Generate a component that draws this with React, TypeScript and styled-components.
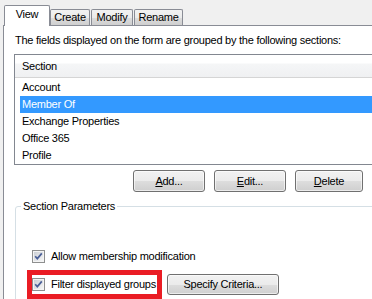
import React from "react";
import styled, { createGlobalStyle } from "styled-components";

const GlobalStyle = createGlobalStyle`
  html, body { margin: 0; padding: 0; background: #f0f0f0; }
  body {
    font-family: "Liberation Sans", Arial, sans-serif;
    font-size: 11px;
    letter-spacing: -0.25px;
    color: #000;
  }
`;

const Window = styled.div`
  width: 372px;
  height: 299px;
  overflow: hidden;
  background: #f0f0f0;
  padding: 5px 0 0 3px;
  box-sizing: border-box;
`;

const TabStrip = styled.div`
  display: flex;
  align-items: flex-end;
  height: 21px;
  padding-left: 1px;
  position: relative;
  z-index: 1;
`;

const Tab = styled.div<{ $active?: boolean; $w: number }>`
  box-sizing: border-box;
  width: ${(p) => p.$w}px;
  height: ${(p) => (p.$active ? 21 : 16)}px;
  margin-bottom: ${(p) => (p.$active ? 0 : 1)}px;
  margin-left: ${(p) => (p.$active ? 0 : 1)}px;
  margin-right: ${(p) => (p.$active ? -1 : 0)}px;
  border: 1px solid #898c95;
  border-bottom: none;
  border-radius: 2px 2px 0 0;
  background: ${(p) =>
    p.$active ? "#fff" : "linear-gradient(#f2f2f2, #ebebeb 50%, #dddddd 51%, #cfcfcf)"};
  padding-top: ${(p) => (p.$active ? 2 : 1)}px;
  line-height: 13px;
  text-align: center;
  white-space: nowrap;
`;

const Panel = styled.div`
  margin-top: -1px;
  width: 420px;
  height: 320px;
  background: #fff;
  border: 1px solid #898c95;
  box-sizing: border-box;
  padding: 8px 0 0 10px;
  display: flex;
  flex-direction: column;
`;

const Description = styled.div`
  line-height: 13px;
  padding-left: 1px;
  white-space: nowrap;
`;

const ListBox = styled.div`
  margin-top: 7px;
  width: 400px;
  height: 112px;
  box-sizing: border-box;
  border: 1px solid #828790;
  display: flex;
  flex-direction: column;
`;

const ListHeader = styled.div`
  height: 23px;
  box-sizing: border-box;
  border-bottom: 1px solid #d5d5d5;
  background: linear-gradient(#ffffff 0, #ffffff 8px, #f5f6f7 9px, #eff0f2 100%);
  padding: 5px 0 0 7px;
  line-height: 13px;
`;

const Rows = styled.div`
  padding-top: 1px;
  display: flex;
  flex-direction: column;
`;

const Row = styled.div<{ $selected?: boolean }>`
  height: 17px;
  line-height: 17px;
  margin-left: 5px;
  padding-left: 2px;
  background: ${(p) => (p.$selected ? "#3399ff" : "transparent")};
  color: ${(p) => (p.$selected ? "#fff" : "#000")};
`;

const ButtonRow = styled.div`
  display: flex;
  gap: 9px;
  padding-left: 119px;
  margin-top: 5px;
`;

const Button = styled.button<{ $w: number; $h?: number }>`
  box-sizing: border-box;
  width: ${(p) => p.$w}px;
  height: ${(p) => p.$h ?? 22}px;
  border: 1px solid #707070;
  border-radius: 3px;
  background: linear-gradient(#f2f2f2, #ebebeb 50%, #dddddd 51%, #cfcfcf);
  box-shadow: inset 0 0 0 1px rgba(255, 255, 255, 0.6);
  font: inherit;
  letter-spacing: inherit;
  color: #000;
  padding: 0;
  line-height: 13px;
  flex: none;
`;

const GroupBox = styled.fieldset`
  margin: 8px 0 0 1px;
  width: 400px;
  height: 200px;
  box-sizing: border-box;
  border: 1px solid #d5dfe5;
  border-radius: 3px;
  padding: 0 0 0 5px;
  display: flex;
  flex-direction: column;
`;

const Legend = styled.legend`
  padding: 0 2px;
  line-height: 13px;
`;

const CheckRow = styled.label<{ $indent: number; $top: number }>`
  display: flex;
  align-items: center;
  gap: 6px;
  margin-left: ${(p) => p.$indent}px;
  margin-top: ${(p) => p.$top}px;
  line-height: 13px;
  white-space: nowrap;
`;

const CriteriaRow = styled.div`
  display: flex;
  align-items: center;
  gap: 5px;
  margin-left: 6px;
  margin-top: 7px;
`;

const Highlight = styled.div`
  display: flex;
  align-items: center;
  gap: 6px;
  height: 29px;
  box-sizing: border-box;
  border: 5px solid #ea1c24;
  padding-right: 1px;
  line-height: 13px;
  white-space: nowrap;
`;

const Check = () => (
  <svg width="13" height="13" viewBox="0 0 13 13" style={{ flex: "none", display: "block" }}>
    <defs>
      <linearGradient id="cbg" x1="0" y1="0" x2="1" y2="1">
        <stop offset="0" stopColor="#cbcfd5" />
        <stop offset="1" stopColor="#f6f6f6" />
      </linearGradient>
    </defs>
    <rect x="0.5" y="0.5" width="12" height="12" fill="#f4f4f4" stroke="#8e8f8f" />
    <rect x="2" y="2" width="9" height="9" fill="url(#cbg)" />
    <path d="M3.2 6.2 L5.3 8.6 L9.8 3.4" fill="none" stroke="#4a5f97" strokeWidth="1.7" />
  </svg>
);

export default function App() {
  return (
    <>
      <GlobalStyle />
      <Window>
        <TabStrip>
          <Tab $active $w={46}>View</Tab>
          <Tab $w={40}>Create</Tab>
          <Tab $w={42}>Modify</Tab>
          <Tab $w={49}>Rename</Tab>
        </TabStrip>
        <Panel>
          <Description>The fields displayed on the form are grouped by the following sections:</Description>
          <ListBox>
            <ListHeader>Section</ListHeader>
            <Rows>
              <Row>Account</Row>
              <Row $selected>Member Of</Row>
              <Row>Exchange Properties</Row>
              <Row>Office 365</Row>
              <Row>Profile</Row>
            </Rows>
          </ListBox>
          <ButtonRow>
            <Button $w={72}><u>A</u>dd...</Button>
            <Button $w={72}><u>E</u>dit...</Button>
            <Button $w={68}><u>D</u>elete</Button>
          </ButtonRow>
          <GroupBox>
            <Legend>Section Parameters</Legend>
            <CheckRow $indent={11} $top={37}>
              <Check />
              Allow membership modification
            </CheckRow>
            <CriteriaRow>
              <Highlight>
                <Check />
                Filter displayed groups
              </Highlight>
              <Button $w={112} $h={21}>Specify Criteria...</Button>
            </CriteriaRow>
          </GroupBox>
        </Panel>
      </Window>
    </>
  );
}
